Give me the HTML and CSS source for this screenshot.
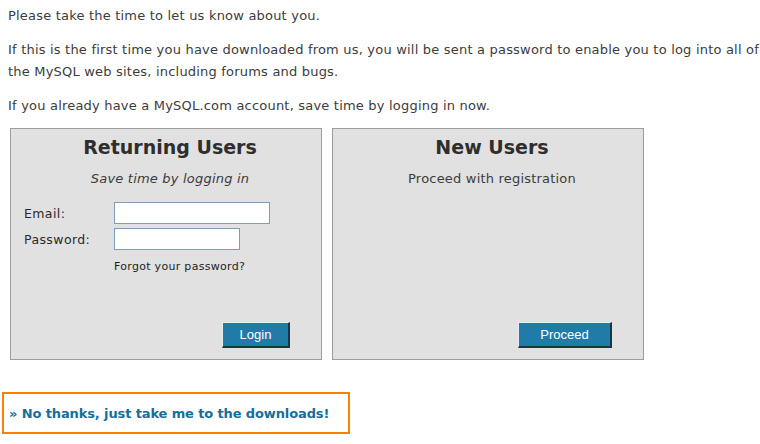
FILE: index.html
```html
<!DOCTYPE html>
<html>
<head>
<meta charset="utf-8">
<link rel="stylesheet" href="styles.css">
</head>
<body>
<div class="page">
  <div class="intro">
    <p>Please take the time to let us know about you.</p>
    <p>If this is the first time you have downloaded from us, you will be sent a password to enable you to log into all of the MySQL web sites, including forums and bugs.</p>
    <p>If you already have a MySQL.com account, save time by logging in now.</p>
  </div>
  <div class="boxes">
    <div class="box">
      <h2 class="box-title">Returning Users</h2>
      <p class="box-sub italic">Save time by logging in</p>
      <div class="box-body">
        <div class="login-grid">
          <label class="lbl">Email:</label>
          <div class="field"><input class="inp inp-email" type="text"></div>
          <label class="lbl">Password:</label>
          <div class="field"><input class="inp inp-pass" type="password"></div>
          <span></span>
          <a class="forgot">Forgot your password?</a>
        </div>
      </div>
      <div class="box-foot"><button class="btn btn-login">Login</button></div>
    </div>
    <div class="box">
      <h2 class="box-title">New Users</h2>
      <p class="box-sub">Proceed with registration</p>
      <div class="box-body"></div>
      <div class="box-foot"><button class="btn btn-proceed">Proceed</button></div>
    </div>
  </div>
  <div class="skip"><a class="skip-link">» No thanks, just take me to the downloads!</a></div>
</div>
</body>
</html>
```
FILE: styles.css
```css
html, body {
  margin: 0;
  padding: 0;
  background: #ffffff;
}
body {
  font-family: "DejaVu Sans", Verdana, sans-serif;
  font-size: 13px;
  letter-spacing: 0.2px;
  color: #3c3c3c;
}
.page {
  width: 760px;
  padding-top: 5px;
}
.intro {
  padding: 0 0 0 8px;
}
.intro p {
  margin: 0 0 12px 0;
  line-height: 22px;
}
.intro p:last-child {
  margin-bottom: 11px;
}
.boxes {
  display: flex;
  gap: 10px;
  margin-left: 10px;
}
.box {
  box-sizing: border-box;
  width: 312px;
  height: 232px;
  background: #e1e1e1;
  border: 1px solid #9d9d9d;
  display: flex;
  flex-direction: column;
}
.box-title {
  margin: 5px 0 0 0;
  padding-left: 8px;
  font-size: 19px;
  line-height: 26px;
  font-weight: bold;
  letter-spacing: 0;
  text-align: center;
  color: #2e2e2e;
}
.box-sub {
  margin: 10px 0 0 0;
  padding-left: 8px;
  text-align: center;
  line-height: 18px;
}
.italic {
  font-style: italic;
}
.box-body {
  flex: 1;
  padding: 14px 0 0 13px;
}
.login-grid {
  display: grid;
  grid-template-columns: 90px auto;
  row-gap: 4px;
  align-items: center;
}
.lbl {
  font-size: 12.5px;
  letter-spacing: 0.4px;
  color: #2a2a2a;
}
.field {
  display: flex;
}
.inp {
  box-sizing: border-box;
  height: 22px;
  border: 1px solid #7f9db9;
  background: #ffffff;
  margin: 0;
  padding: 0 2px;
}
.inp-email { width: 156px; }
.inp-pass { width: 126px; }
.forgot {
  font-size: 11px;
  letter-spacing: 0.3px;
  color: #1e1e1e;
  margin-top: 5px;
  line-height: 16px;
}
.box-foot {
  display: flex;
  justify-content: flex-end;
  padding: 0 31px 11px 0;
}
.btn {
  box-sizing: border-box;
  height: 26px;
  margin: 0;
  padding: 0;
  background: #217ba9;
  color: #ffffff;
  font-family: "Liberation Sans", Arial, sans-serif;
  font-size: 13px;
  letter-spacing: 0;
  border-style: solid;
  border-width: 1px 2px 2px 1px;
  border-color: #e6eef3 #1d3347 #1d3347 #e6eef3;
}
.btn-login { width: 68px; }
.btn-proceed { width: 94px; }
.skip {
  box-sizing: border-box;
  margin: 32px 0 0 2px;
  width: 348px;
  height: 42px;
  border: 2px solid #ff7f00;
  display: flex;
  align-items: center;
  padding-left: 5px;
}
.skip-link {
  font-weight: bold;
  font-size: 13px;
  letter-spacing: -0.12px;
  color: #176e9c;
}
```
